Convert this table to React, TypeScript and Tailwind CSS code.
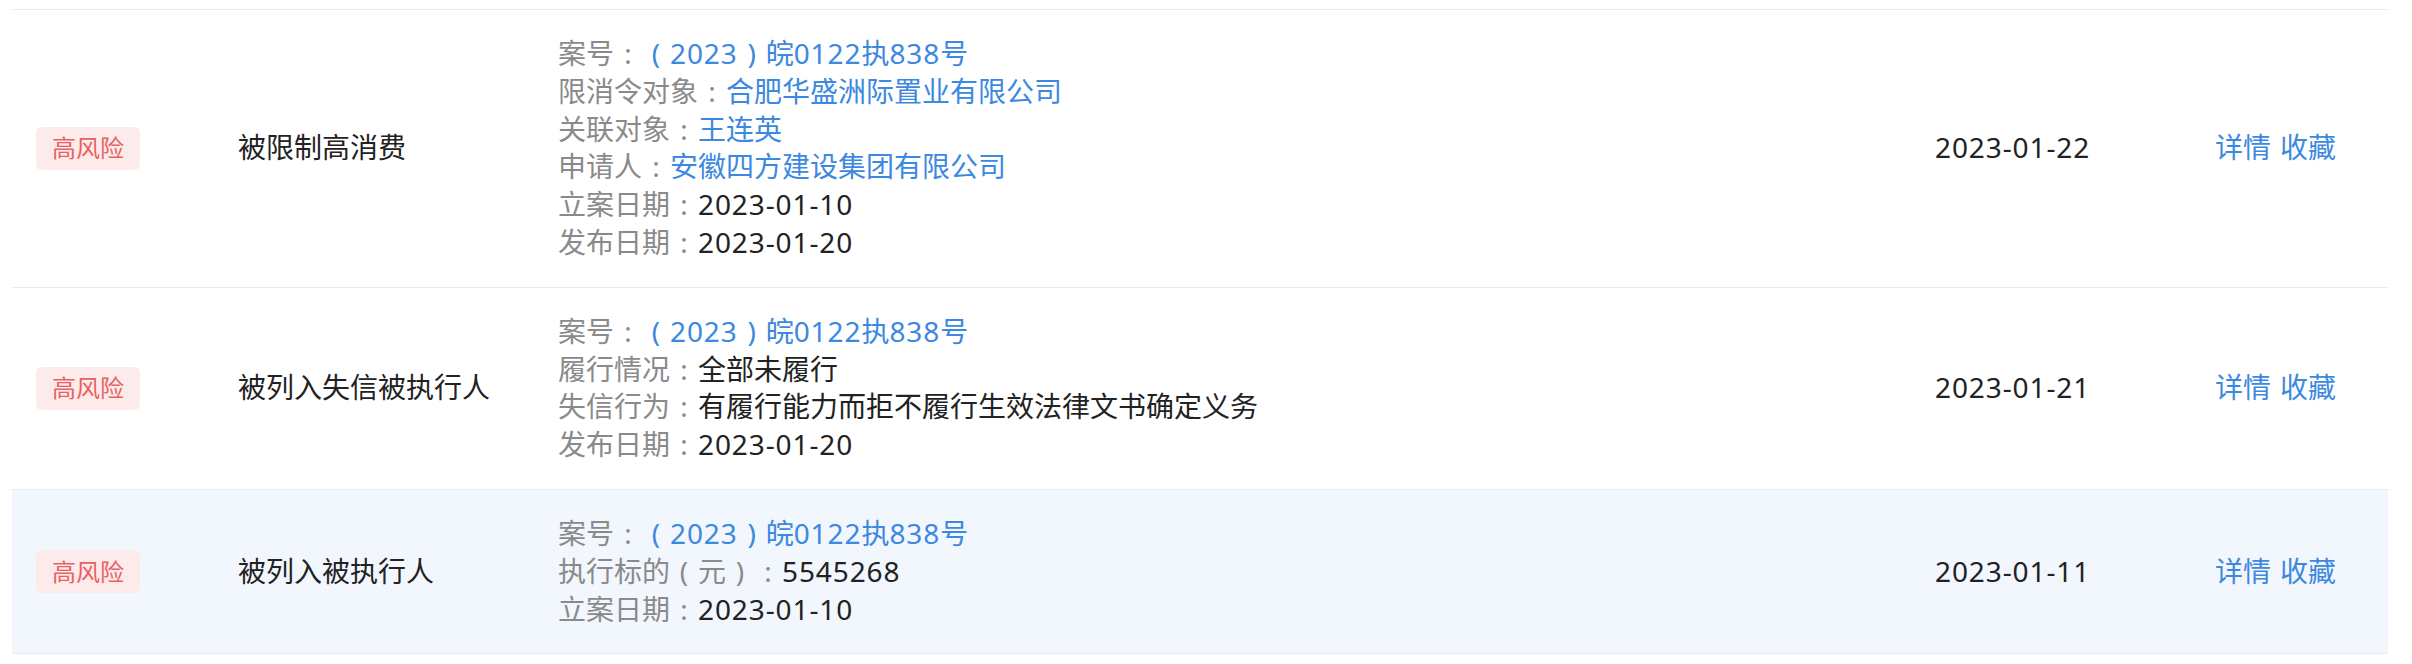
import React from "react";

type Line = { label: string; value: string; link?: boolean };
type Row = { title: string; lines: Line[]; date: string; alt?: boolean };

const caseNo = "（2023）皖0122执838号";

const rows: Row[] = [
  {
    title: "被限制高消费",
    lines: [
      { label: "案号：", value: caseNo, link: true },
      { label: "限消令对象：", value: "合肥华盛洲际置业有限公司", link: true },
      { label: "关联对象：", value: "王连英", link: true },
      { label: "申请人：", value: "安徽四方建设集团有限公司", link: true },
      { label: "立案日期：", value: "2023-01-10" },
      { label: "发布日期：", value: "2023-01-20" },
    ],
    date: "2023-01-22",
  },
  {
    title: "被列入失信被执行人",
    lines: [
      { label: "案号：", value: caseNo, link: true },
      { label: "履行情况：", value: "全部未履行" },
      { label: "失信行为：", value: "有履行能力而拒不履行生效法律文书确定义务" },
      { label: "发布日期：", value: "2023-01-20" },
    ],
    date: "2023-01-21",
  },
  {
    title: "被列入被执行人",
    lines: [
      { label: "案号：", value: caseNo, link: true },
      { label: "执行标的（元）：", value: "5545268" },
      { label: "立案日期：", value: "2023-01-10" },
    ],
    date: "2023-01-11",
    alt: true,
  },
];

const puncMap: Record<string, string> = { "：": ":", "（": "(", "）": ")" };

function Rich({ text }: { text: string }) {
  const parts = text.split(/([：（）]|[0-9\-]+)/).filter((p) => p !== "");
  return (
    <>
      {parts.map((p, i) => {
        if (puncMap[p]) {
          return (
            <span key={i} className="inline-block w-[28px] text-center">
              {puncMap[p]}
            </span>
          );
        }
        if (/^[0-9\-]+$/.test(p)) {
          return (
            <span key={i} className="tracking-[0.9px]">
              {p}
            </span>
          );
        }
        return <span key={i}>{p}</span>;
      })}
    </>
  );
}

export default function App() {
  return (
    <div
      className="w-[2412px] h-[664px] bg-white pt-[9px] pl-[12px] pr-[24px]"
      style={{ fontFamily: '"Noto Sans", "Noto Sans CJK SC", sans-serif' }}
    >
      <div className="border-t border-[#ebebeb]">
        {rows.map((r, i) => (
          <div
            key={i}
            className={`flex items-center border-b border-[#ebebeb] ${r.alt ? "bg-[#f2f7fe]" : "bg-white"}`}
          >
            <div className="w-[226px] shrink-0 pl-[24px]">
              <span className="inline-flex items-center h-[43px] px-[16px] rounded-[6px] bg-[#fdeaea] text-[#e8625f] text-[24px] leading-none">
                高风险
              </span>
            </div>
            <div className="w-[320px] shrink-0 text-[28px] leading-[37.8px] text-[#222222]">
              {r.title}
            </div>
            <div className="flex-1 py-[25px] text-[28px] leading-[37.8px]">
              {r.lines.map((l, j) => (
                <div key={j} className="whitespace-nowrap">
                  <span className="text-[#8a8a8a]">
                    <Rich text={l.label} />
                  </span>
                  <span className={l.link ? "text-[#3d88e0]" : "text-[#222222]"}>
                    <Rich text={l.value} />
                  </span>
                </div>
              ))}
            </div>
            <div className="w-[280px] shrink-0 text-[28px] leading-[37.8px] text-[#222222]">
              <Rich text={r.date} />
            </div>
            <div className="w-[173px] shrink-0 text-[28px] leading-[37.8px] text-[#3d88e0] whitespace-nowrap">
              <span>详情</span>
              <span className="ml-[9px]">收藏</span>
            </div>
          </div>
        ))}
      </div>
    </div>
  );
}
